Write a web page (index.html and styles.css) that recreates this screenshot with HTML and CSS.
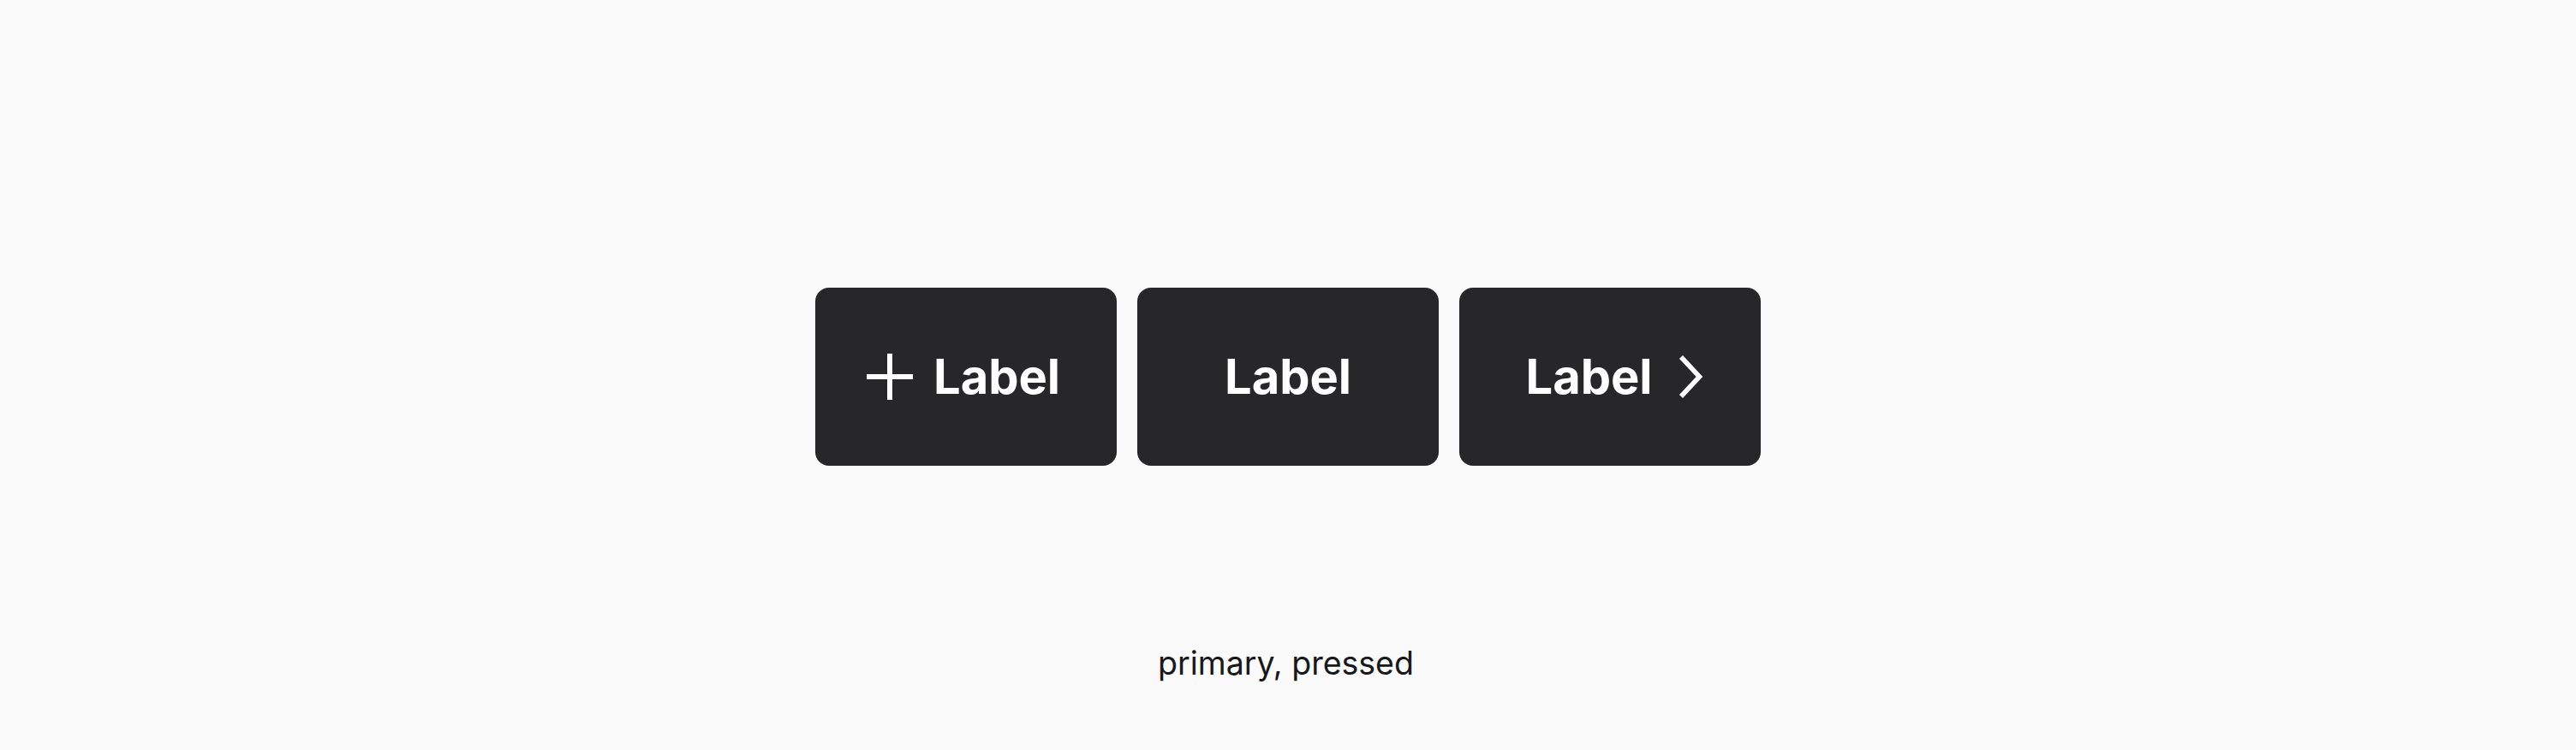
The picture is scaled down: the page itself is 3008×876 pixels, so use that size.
FILE: index.html
```html
<!DOCTYPE html>
<html lang="en">
<head>
    <meta charset="UTF-8">
    <meta name="viewport" content="width=device-width, initial-scale=1.0">
    <title>Button – primary, pressed</title>
    <link rel="stylesheet" href="styles.css">
</head>
<body>
    <div class="story">
        <div class="button-row">
            <button class="btn btn-primary btn-leading">
                <svg class="icon icon-plus" viewBox="0 0 54 54" aria-hidden="true">
                    <path d="M27 0v54M0 27h54" />
                </svg>
                <span class="btn-label">Label</span>
            </button>
            <button class="btn btn-primary">
                <span class="btn-label">Label</span>
            </button>
            <button class="btn btn-primary btn-trailing">
                <span class="btn-label">Label</span>
                <svg class="icon icon-chevron" viewBox="0 0 30 54" aria-hidden="true">
                    <path d="M3 4 24.5 27 3 50" />
                </svg>
            </button>
        </div>
        <p class="story-caption">primary, pressed</p>
    </div>
</body>
</html>
```

FILE: styles.css
```css
html,
body {
  margin: 0;
  padding: 0;
  background-color: #fafafa;
}

.story {
  display: flex;
  flex-direction: column;
  align-items: center;
  min-height: 876px;
  padding-top: 336px;
  box-sizing: border-box;
  font-family: 'Inter', 'Noto Sans', sans-serif;
}

.button-row {
  display: flex;
  gap: 24px;
}

.btn {
  display: flex;
  align-items: center;
  justify-content: center;
  gap: 24px;
  width: 352px;
  height: 208px;
  padding: 0;
  border: none;
  border-radius: 16px;
  font-family: inherit;
  font-size: 56px;
  font-weight: 700;
  line-height: 1;
  cursor: pointer;
}

.btn-primary {
  background-color: #27272a; /* pressed shade */
  color: #ffffff;
}

.btn-leading {
  padding-right: 6px;
}

.btn-trailing {
  gap: 30px;
  padding-left: 11px;
}

.icon {
  flex: none;
  fill: none;
  stroke: #ffffff;
  stroke-width: 6;
  overflow: visible;
}

.icon-plus {
  width: 54px;
  height: 54px;
}

.icon-chevron {
  width: 30px;
  height: 54px;
  stroke-width: 5.5;
}

.story-caption {
  margin: 204px 0 0;
  padding-right: 5px;
  font-size: 37.5px;
  line-height: 54px;
  color: #18181b;
}
```
